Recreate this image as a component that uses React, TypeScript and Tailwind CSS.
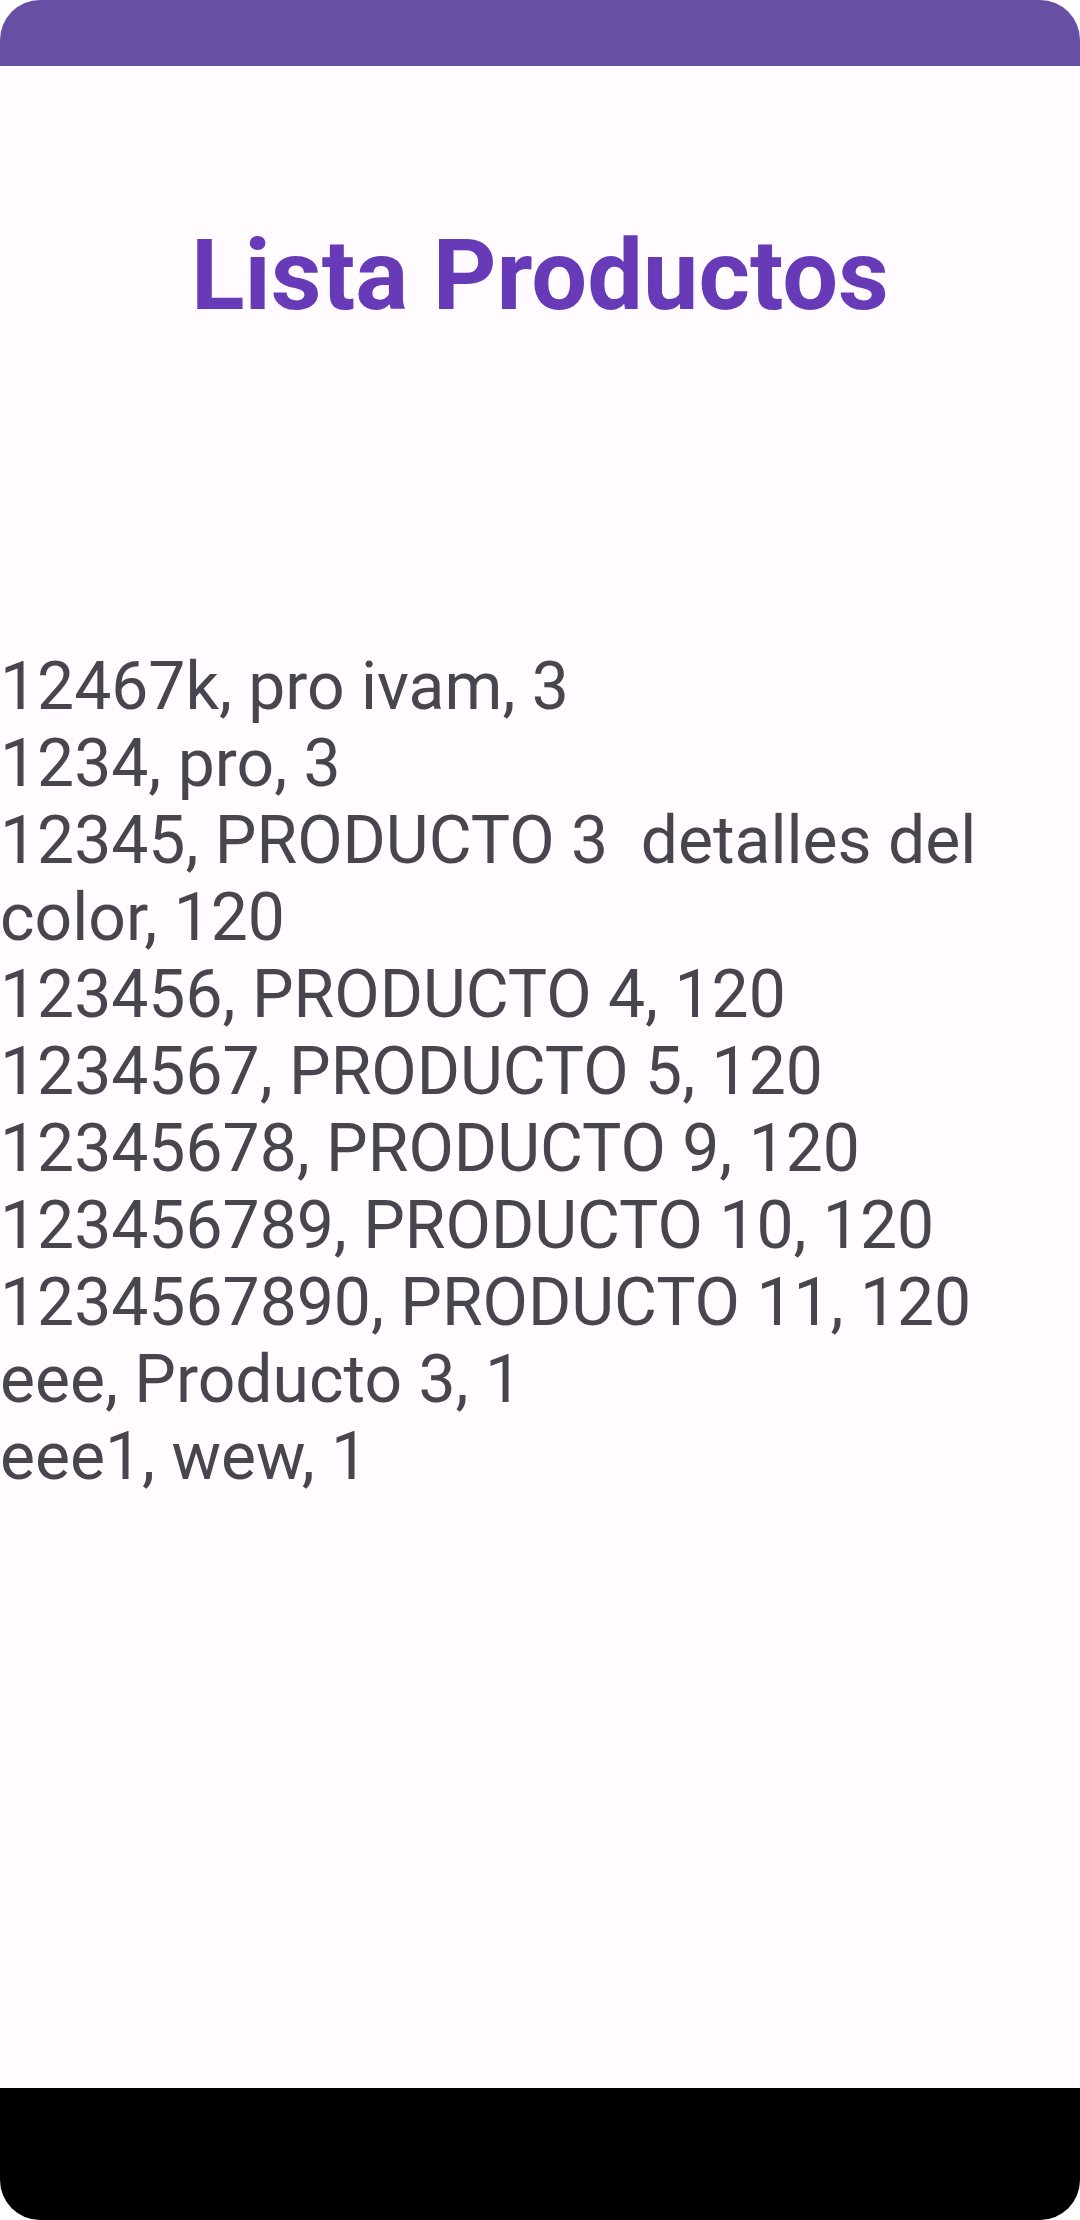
const productos = [
  "12467k, pro ivam, 3",
  "1234, pro, 3",
  "12345, PRODUCTO 3  detalles del color, 120",
  "123456, PRODUCTO 4, 120",
  "1234567, PRODUCTO 5, 120",
  "12345678, PRODUCTO 9, 120",
  "123456789, PRODUCTO 10, 120",
  "1234567890, PRODUCTO 11, 120",
  "eee, Producto 3, 1",
  "eee1, wew, 1",
];

export default function App() {
  return (
    <div className="h-[2220px] w-[1080px] bg-white font-['Roboto',sans-serif]">
      <div className="flex h-full flex-col overflow-hidden rounded-[40px] bg-[#FFFBFE]">
        {/* status bar */}
        <div className="h-[66px] shrink-0 bg-[#6750A4]" />

        <main className="flex-1">
          <h1 className="mt-[151px] text-center text-[99px] font-bold leading-[116px] text-[#673AB7]">
            Lista Productos
          </h1>
          <div className="mt-[315px] text-[66px] leading-[77px] text-[#49454F]">
            {productos.map((p) => (
              <p key={p} className="whitespace-pre-wrap">
                {p}
              </p>
            ))}
          </div>
        </main>

        {/* navigation bar */}
        <div className="h-[132px] shrink-0 bg-black" />
      </div>
    </div>
  );
}
